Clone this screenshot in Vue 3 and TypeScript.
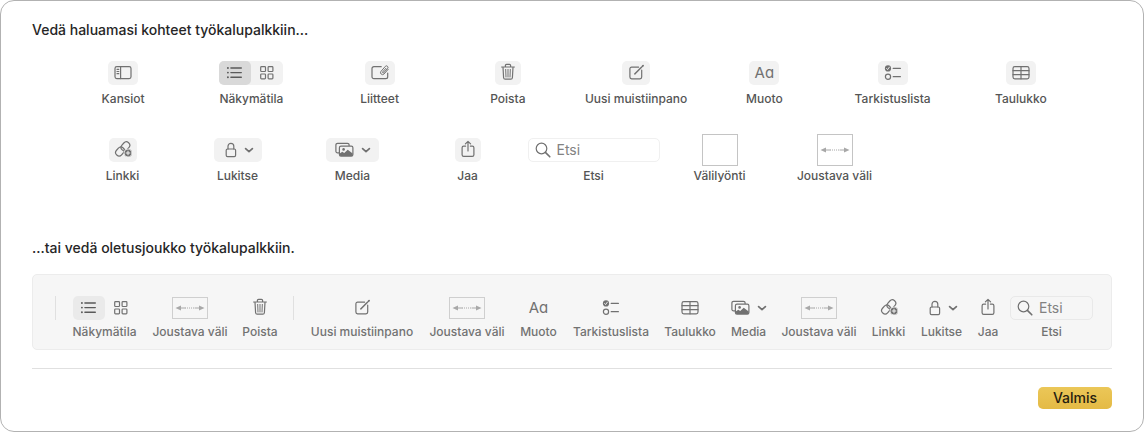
<script setup lang="ts">
import { ref } from 'vue'

type Kind = 'button' | 'menu' | 'toggle' | 'text' | 'search' | 'space' | 'flexible' | 'separator'

interface Item {
  kind: Kind
  label: string
  icon?: string
  size?: 'small' | 'medium' | 'large'
  /** Share of the row's width. */
  span: number
}

interface Row {
  name: string
  items: Item[]
}

interface Section {
  id: string
  heading: string
  rows: Row[]
}

const item = (kind: Kind, label: string, span: number, icon?: string, size: Item['size'] = 'medium'): Item => ({
  kind,
  label,
  span,
  icon,
  size,
})

const sections: Section[] = [
  {
    id: 'palette',
    heading: 'Vedä haluamasi kohteet työkalupalkkiin…',
    rows: [
      {
        name: 'even',
        items: [
          item('button', 'Kansiot', 1, 'sidebar', 'large'),
          item('toggle', 'Näkymätila', 1),
          item('button', 'Liitteet', 1, 'attachment', 'large'),
          item('button', 'Poista', 1, 'trash', 'small'),
          item('button', 'Uusi muistiinpano', 1, 'compose'),
          item('text', 'Muoto', 1, undefined, 'large'),
          item('button', 'Tarkistuslista', 1, 'checklist', 'large'),
          item('button', 'Taulukko', 1, 'table', 'large'),
        ],
      },
      {
        name: 'ragged',
        items: [
          item('button', 'Linkki', 115, 'link'),
          item('menu', 'Lukitse', 115, 'lock', 'small'),
          item('menu', 'Media', 115, 'media', 'large'),
          item('button', 'Jaa', 115, 'share', 'small'),
          item('search', 'Etsi', 137),
          item('space', 'Välilyönti', 115),
          item('flexible', 'Joustava väli', 115),
        ],
      },
    ],
  },
  {
    id: 'default',
    heading: '…tai vedä oletusjoukko työkalupalkkiin.',
    rows: [
      {
        name: 'tray',
        items: [
          item('separator', '', 1),
          item('toggle', 'Näkymätila', 65),
          item('flexible', 'Joustava väli', 74),
          item('button', 'Poista', 34, 'trash', 'small'),
          item('separator', '', 1),
          item('button', 'Uusi muistiinpano', 104, 'compose'),
          item('flexible', 'Joustava väli', 74),
          item('text', 'Muoto', 37, undefined, 'large'),
          item('button', 'Tarkistuslista', 76, 'checklist', 'large'),
          item('button', 'Taulukko', 50, 'table', 'large'),
          item('menu', 'Media', 35, 'media', 'large'),
          item('flexible', 'Joustava väli', 74),
          item('button', 'Linkki', 33, 'link'),
          item('menu', 'Lukitse', 41, 'lock', 'small'),
          item('button', 'Jaa', 20, 'share', 'small'),
          item('search', 'Etsi', 75),
        ],
      },
    ],
  },
]

const columns = (row: Row): string => row.items.map((entry) => `minmax(0, ${entry.span}fr)`).join(' ')

const view = ref<'list' | 'grid'>('list')
const query = ref('')
</script>

<template>
  <svg class="symbols" aria-hidden="true">
    <symbol id="sidebar" viewBox="0 0 20 20">
      <rect x="2" y="3.6" width="16" height="12" rx="1.8" />
      <path d="M7.6 3.6v12M4 6.3h1.8M4 8.5h1.8M4 10.7h1.8" />
    </symbol>
    <symbol id="list" viewBox="0 0 20 20">
      <path d="M5.900 5h10.400M5.900 9.600h10.400M5.900 14.200h10.400" stroke-width="1.4" />
      <g fill="currentColor" stroke="none">
        <circle cx="2.900" cy="5" r="0.95" /><circle cx="2.900" cy="9.6" r="0.95" /><circle cx="2.900" cy="14.2" r="0.95" />
      </g>
    </symbol>
    <symbol id="grid" viewBox="0 0 20 20">
      <rect x="3.7" y="3.7" width="4.8" height="4.8" rx="0.8" />
      <rect x="11.1" y="3.7" width="4.8" height="4.8" rx="0.8" />
      <rect x="3.7" y="11" width="4.8" height="4.8" rx="0.8" />
      <rect x="11.1" y="11" width="4.8" height="4.8" rx="0.8" />
    </symbol>
    <symbol id="attachment" viewBox="0 0 20 20">
      <path d="M11.2 3.7H3.9A1.9 1.9 0 0 0 2 5.600v8.200a1.900 1.900 0 0 0 1.900 1.900h11.900a1.900 1.900 0 0 0 1.900-1.900V10" />
      <path d="M18.300 6.200l-4.400 4.900a2 2 0 0 1-3-2.600l4.400-5.100a1.500 1.500 0 0 1 2.300 2l-4 4.500a.7.7 0 0 1-1-.9l3.300-3.700" stroke-width="1" />
    </symbol>
    <symbol id="trash" viewBox="0 0 20 20">
      <path d="M3.600 4h12.800M7.400 4V2.500a1.100 1.100 0 0 1 1.100-1.100h3a1.100 1.100 0 0 1 1.100 1.100V4M5 4.200l.6 10.600a1.600 1.600 0 0 0 1.600 1.400h5.600a1.600 1.600 0 0 0 1.600-1.400l.6-10.600" />
      <path d="M7.700 6.400l.3 7.600M10 6.400v7.600M12.300 6.400l-.3 7.600" stroke-width="1" />
    </symbol>
    <symbol id="compose" viewBox="0 0 20 20">
      <path d="M12.600 4.200H5.600a1.700 1.700 0 0 0-1.700 1.700v8.200a1.700 1.700 0 0 0 1.700 1.700h8.400a1.700 1.700 0 0 0 1.700-1.700V7.200" />
      <path d="M9 10.700l6.700-6.700" stroke-width="1.500" />
      <path d="M16.600 3.100l.5-.5" stroke-width="1.700" />
      <path d="M8.100 11.600l.4-1.300.9.900z" fill="currentColor" stroke="none" />
    </symbol>
    <symbol id="checklist" viewBox="0 0 20 20">
      <circle cx="5" cy="5.400" r="3.100" fill="currentColor" stroke="none" />
      <path class="cutout" d="M3.600 5.500l1 1.100 1.800-2.500" stroke-width="0.900" />
      <circle cx="5" cy="13.700" r="2.600" />
      <path d="M10.200 5.400h7.200M10.200 13.700h7.200" />
    </symbol>
    <symbol id="table" viewBox="0 0 20 20">
      <rect x="2" y="3.600" width="16" height="12.200" rx="1.800" />
      <path d="M2 7.700h16M2 11.700h16M10 3.600v12.200" />
    </symbol>
    <symbol id="link" viewBox="0 0 20 20">
      <rect x="-4.800" y="-3.400" width="9.600" height="6.800" rx="3.400" transform="translate(12.400 6.300) rotate(-48)" />
      <rect x="-4.800" y="-3.400" width="9.600" height="6.800" rx="3.400" transform="translate(7 11.500) rotate(-48)" />
      <circle class="cutout" cx="15" cy="13" r="4" fill="currentColor" stroke-width="0.800" />
      <path class="cutout" d="M15 11.200v3.600M13.200 13h3.600" stroke-width="1" />
    </symbol>
    <symbol id="lock" viewBox="0 0 20 20">
      <rect x="5.200" y="9" width="9.400" height="7.600" rx="1.300" />
      <path d="M7 9V6.300a2.900 2.900 0 0 1 5.800 0V9" />
    </symbol>
    <symbol id="media" viewBox="0 0 20 20">
      <path d="M4.600 12.900H3.500a1.600 1.600 0 0 1-1.600-1.600V4.900a1.600 1.600 0 0 1 1.600-1.600h10a1.600 1.600 0 0 1 1.600 1.600v.6" />
      <rect x="5.400" y="6.200" width="13.500" height="10" rx="1.600" />
      <path d="M5.700 13.600l2.600-1.900 1.900 1.300 3.500-3.300 5 3.700v1.800l-1 .9H6.600l-.9-.9z" fill="currentColor" stroke="none" />
      <circle cx="9.600" cy="9.400" r="1.300" fill="currentColor" stroke="none" />
    </symbol>
    <symbol id="share" viewBox="0 0 20 20">
      <path d="M7.600 6.200H5.700a1.600 1.600 0 0 0-1.600 1.600v7a1.600 1.600 0 0 0 1.600 1.600h8.600a1.600 1.600 0 0 0 1.600-1.600v-7a1.600 1.600 0 0 0-1.600-1.600h-1.900M10 11V1.400M7.400 3.900L10 1.300l2.600 2.600" />
    </symbol>
    <symbol id="glass" viewBox="0 0 16 16">
      <circle cx="6.500" cy="6.500" r="5.300" />
      <path d="M10.400 10.400l4.400 4.400" stroke-width="1.600" />
    </symbol>
    <symbol id="chevron" viewBox="0 0 10 10">
      <path d="M1.600 3.600L5 6.700l3.400-3.100" stroke-width="1.700" />
    </symbol>
    <symbol id="stretch" viewBox="0 0 32 10">
      <path d="M6 5h5M21 5h5" stroke-width="1" />
      <path d="M11 5h10" stroke-width="1" stroke-dasharray="1 1" stroke-linecap="butt" />
      <path d="M1.500 5l5.500-2.500v5zM30.500 5l-5.500-2.500v5z" fill="currentColor" stroke="none" />
    </symbol>
  </svg>

  <main class="sheet">
    <section v-for="section in sections" :key="section.id" :class="section.id">
      <h2>{{ section.heading }}</h2>
      <div
        v-for="row in section.rows"
        :key="row.name"
        class="row"
        :class="row.name"
        :style="{ gridTemplateColumns: columns(row) + (row.name === 'ragged' ? ' minmax(0, 193fr)' : '') }"
      >
        <div v-for="(entry, index) in row.items" :key="index" class="item">
          <div class="slot">
            <div v-if="entry.kind === 'toggle'" class="toggle" role="group" :aria-label="entry.label">
              <button type="button" aria-label="Luettelo" :aria-pressed="view === 'list'" @click="view = 'list'">
                <svg class="icon"><use href="#list" /></svg>
              </button>
              <button type="button" aria-label="Galleria" :aria-pressed="view === 'grid'" @click="view = 'grid'">
                <svg class="icon"><use href="#grid" /></svg>
              </button>
            </div>
            <div v-else-if="entry.kind === 'search'" class="search">
              <svg class="glass"><use href="#glass" /></svg>
              <input :id="`${section.id}-search`" v-model="query" type="text" placeholder="Etsi" />
            </div>
            <span v-else-if="entry.kind === 'space'" class="space"></span>
            <span v-else-if="entry.kind === 'flexible'" class="space flexible">
              <svg class="stretch"><use href="#stretch" /></svg>
            </span>
            <span v-else-if="entry.kind === 'separator'" class="separator"></span>
            <button
              v-else
              :id="`${section.id}-${row.name}-${index}`"
              type="button"
              class="tool"
              :class="[entry.kind, entry.size]"
              :aria-label="entry.label"
              :aria-haspopup="entry.kind === 'menu' ? 'menu' : undefined"
            >
              <span v-if="entry.kind === 'text'">Aa</span>
              <svg v-else class="icon"><use :href="`#${entry.icon}`" /></svg>
              <svg v-if="entry.kind === 'menu'" class="chevron"><use href="#chevron" /></svg>
            </button>
          </div>
          <label v-if="entry.kind === 'search'" class="caption" :for="`${section.id}-search`">{{ entry.label }}</label>
          <span v-else class="caption">{{ entry.label }}</span>
        </div>
      </div>
    </section>
    <footer>
      <button type="button" class="done">Valmis</button>
    </footer>
  </main>
</template>

<style>
body {
  margin: 0;
  background: #fff;
}
</style>

<style scoped>
.symbols {
  position: absolute;
  width: 0;
  height: 0;
}

.sheet {
  box-sizing: border-box;
  padding: 19px 31px 22px;
  border: 1px solid #b2b2b2;
  border-radius: 14px;
  background: #fff;
  color: #262626;
  font-family: Inter, "Liberation Sans", sans-serif;
  font-size: 14px;
  line-height: 20px;
}

h2 {
  margin: 0;
  font-size: 14px;
  font-weight: 450;
  line-height: 20px;
}

button,
input {
  margin: 0;
  padding: 0;
  border: 0;
  background: none;
  color: inherit;
  font: inherit;
}

svg {
  flex: none;
  fill: none;
  stroke: currentColor;
  stroke-width: 1.2;
  stroke-linecap: round;
  stroke-linejoin: round;
}

.cutout {
  stroke: #f4f4f4;
}

.row {
  display: grid;
}

.even {
  margin: 21px 27px 31px;
}

.ragged {
  margin: 0 27px 54px;
  padding-left: 6px;
}

.tray {
  column-gap: 16px;
  margin-top: 16px;
  padding: 21px 22px 9px;
  border: 1px solid #ececec;
  border-radius: 5px;
  background: #f6f6f6;
}

.item {
  display: flex;
  flex-direction: column;
  align-items: center;
  gap: 6px;
}

.tray .item {
  gap: 4px;
}

.slot {
  display: flex;
  align-items: center;
  justify-content: center;
  height: 24px;
  color: #717171;
}

.caption {
  color: #555;
  font-size: 12px;
  font-weight: 450;
  line-height: 16px;
  white-space: nowrap;
}

.tray .caption {
  color: #727272;
}

.tool,
.toggle button {
  display: flex;
  flex: none;
  align-items: center;
  justify-content: center;
  height: 24px;
  border-radius: 5px;
}

.tool {
  width: 28px;
  background: #f2f2f2;
}

.tool.small {
  width: 26px;
}

.tool.large {
  width: 30px;
}

.tool.menu {
  gap: 3px;
  width: 48px;
}

.tool.menu.large {
  gap: 7px;
  width: 53px;
}

.tool.text {
  font-size: 15px;
  font-feature-settings: "cv11";
}

.toggle {
  display: flex;
  border-radius: 5px;
  background: #f2f2f2;
}

.toggle button {
  width: 32px;
}

.toggle button[aria-pressed="true"] {
  background: #d9d9d9;
  color: #5a5a5a;
}

.tray .tool,
.tray .toggle {
  background: none;
}

.tray .toggle button[aria-pressed="true"] {
  background: #eaeaea;
}

.icon {
  width: 20px;
  height: 20px;
}

.chevron {
  width: 10px;
  height: 10px;
}

.search {
  display: flex;
  flex: none;
  align-items: center;
  gap: 6px;
  box-sizing: border-box;
  width: 132px;
  height: 24px;
  padding: 0 6px;
  border: 1px solid #f0f0f0;
  border-radius: 5px;
}

.tray .search {
  width: 83px;
  border-color: #e9e9e9;
}

.search input {
  flex: 1;
  min-width: 0;
  outline: none;
  font-size: 14px;
}

.search input::placeholder {
  color: #828282;
  opacity: 1;
}

.glass {
  width: 16px;
  height: 16px;
}

.space {
  display: flex;
  flex: none;
  align-items: center;
  justify-content: center;
  box-sizing: border-box;
  width: 36px;
  height: 32px;
  border: 1px solid #c4c4c4;
  color: #a8a8a8;
}

.tray .space {
  height: 22px;
  border-color: #cfcfcf;
}

.stretch {
  width: 32px;
  height: 10px;
}

.separator {
  width: 1px;
  height: 24px;
  background: #e0e0e0;
}

footer {
  display: flex;
  justify-content: flex-end;
  margin-top: 18px;
  padding-top: 18px;
  border-top: 1px solid #e0e0e0;
}

.done {
  width: 74px;
  height: 22px;
  border-radius: 5px;
  background: linear-gradient(#ebc758, #e4ba45);
  color: #262010;
  font-size: 14px;
  font-weight: 500;
  line-height: 20px;
}
</style>
